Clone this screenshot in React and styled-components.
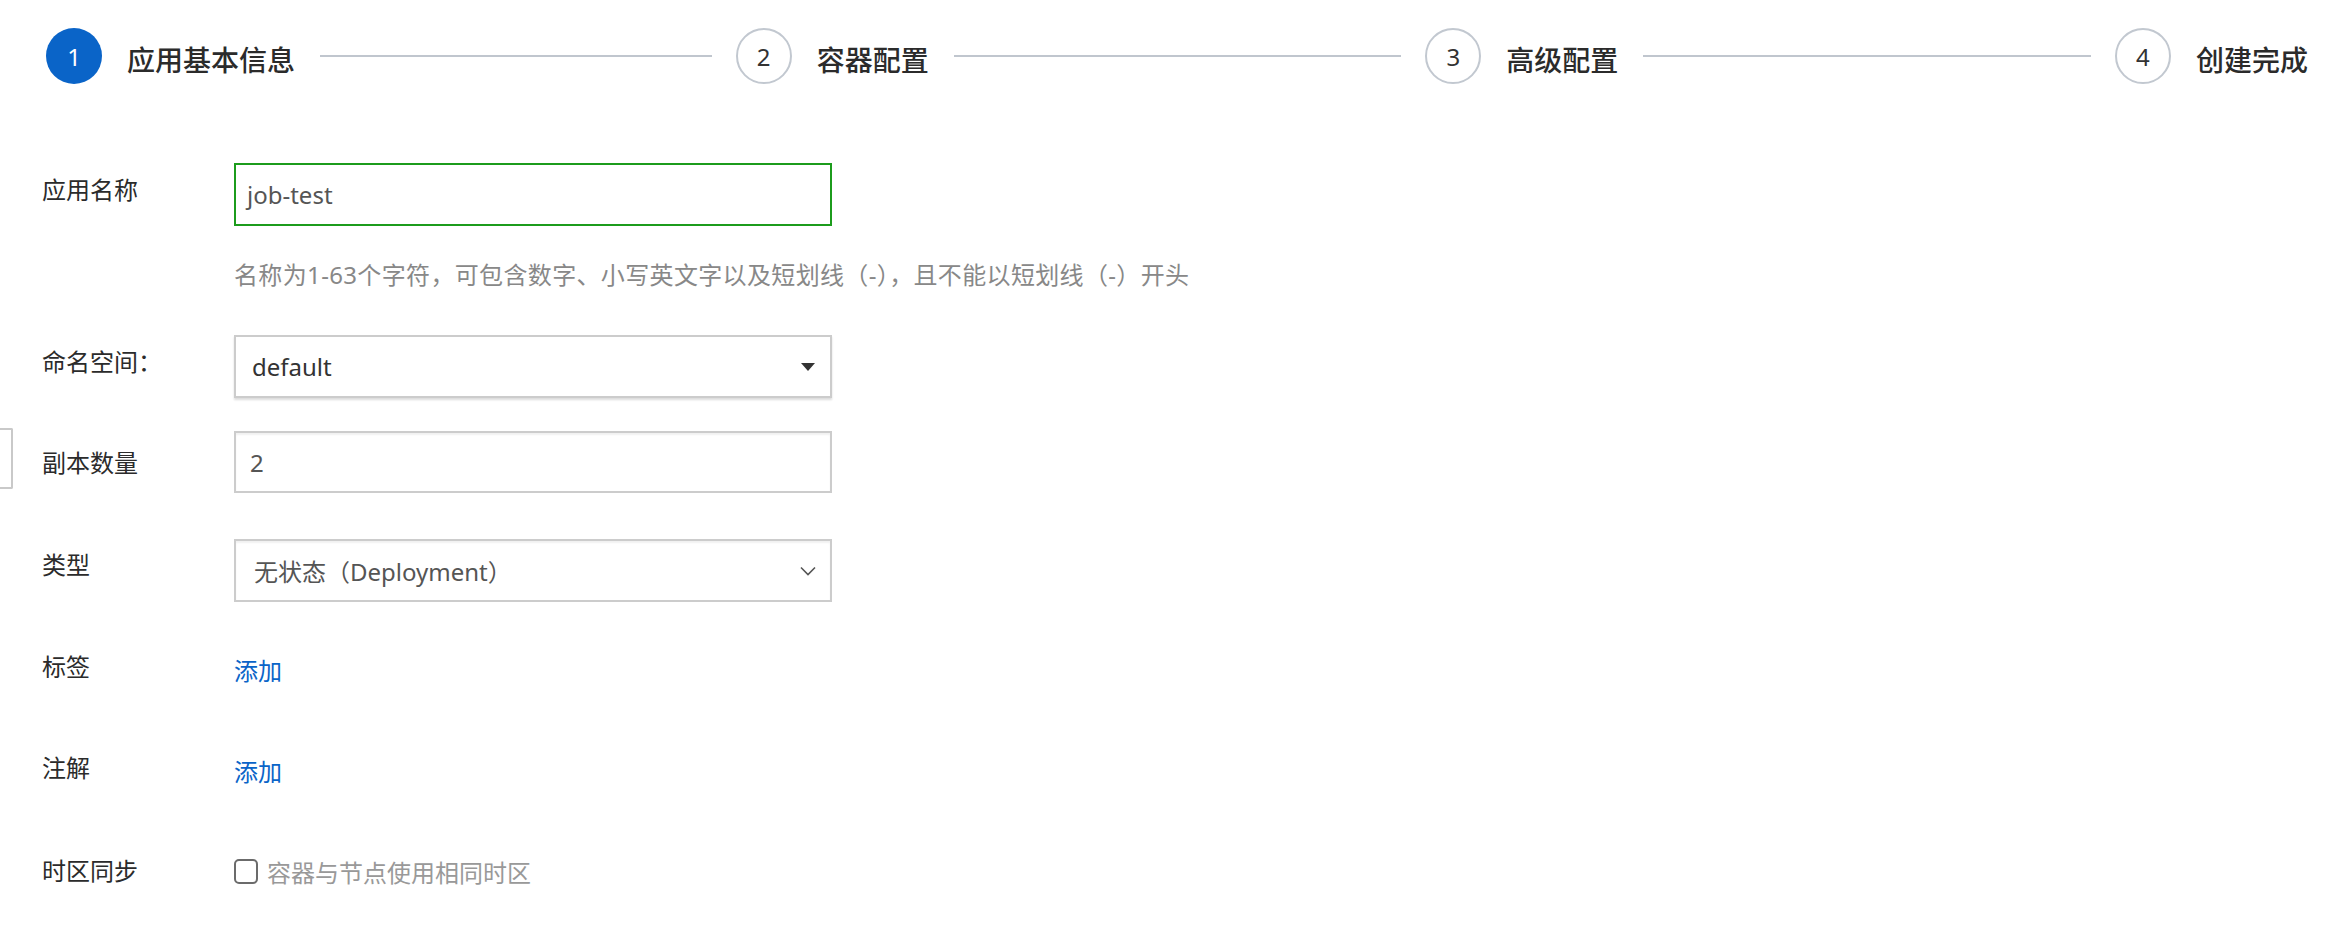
import React from "react";
import styled, { createGlobalStyle } from "styled-components";

const Global = createGlobalStyle`
  html, body { margin: 0; padding: 0; background: #ffffff; }
  body {
    width: 2346px; height: 936px; overflow: hidden;
    font-family: "Noto Sans", "Noto Sans CJK SC", sans-serif;
    color: #333333;
  }
`;

const Page = styled.div`
  position: relative;
  width: 2346px;
  height: 936px;
  background: #ffffff;
  box-sizing: border-box;
`;

const EdgeTab = styled.div`
  position: absolute;
  left: 0;
  top: 428px;
  width: 11px;
  height: 57px;
  border: 2px solid #c9c9c9;
  border-left: none;
  border-radius: 0 2px 2px 0;
`;

const Steps = styled.div`
  display: flex;
  align-items: center;
  padding: 28px 38px 0 46px;
`;

const Step = styled.div`
  display: flex;
  align-items: center;
  flex: ${(p) => (p.$last ? "0 0 auto" : "1 1 0")};
`;

const Circle = styled.div`
  width: 56px;
  height: 56px;
  flex: 0 0 56px;
  box-sizing: border-box;
  border-radius: 50%;
  display: flex;
  align-items: center;
  justify-content: center;
  font-size: 24px;
  font-weight: 400;
  background: ${(p) => (p.$active ? "#0a64c8" : "#ffffff")};
  color: ${(p) => (p.$active ? "#ffffff" : "#333333")};
  border: ${(p) => (p.$active ? "none" : "2px solid #c2c8d0")};
`;

const StepTitle = styled.div`
  margin-left: 25px;
  padding-top: 8px;
  font-size: 28px;
  font-weight: 500;
  line-height: 40px;
  color: #2b2b2b;
  white-space: nowrap;
`;

const StepLine = styled.div`
  flex: 1 1 auto;
  height: 2px;
  background: #c0c6ce;
  margin: 0 24px 0 25px;
`;

const Form = styled.div`
  padding-left: 42px;
  margin-top: 79px;
`;

const Row = styled.div`
  display: flex;
  align-items: flex-start;
  margin-top: ${(p) => p.$mt || 0}px;
`;

const Label = styled.div`
  width: 192px;
  flex: 0 0 192px;
  font-size: 24px;
  line-height: 36px;
  padding-top: ${(p) => p.$pt || 0}px;
  color: #2b2b2b;
  white-space: nowrap;
`;

const Control = styled.div`
  display: flex;
  flex-direction: column;
`;

const Field = styled.div`
  width: 598px;
  height: ${(p) => p.$h || 63}px;
  box-sizing: border-box;
  display: flex;
  align-items: center;
  justify-content: space-between;
  padding: 0 14px 0 ${(p) => p.$pl || 14}px;
  font-size: 24px;
  background: #ffffff;
  color: ${(p) => (p.$muted ? "#555555" : "#333333")};
  border: 2px solid ${(p) => (p.$ok ? "#1c9c1c" : "#cccccc")};
  box-shadow: ${(p) =>
    p.$raised
      ? "0 2px 2px rgba(0,0,0,0.14)"
      : p.$ok
      ? "none"
      : "inset 0 2px 2px rgba(0,0,0,0.06)"};
`;

const Hint = styled.div`
  margin-top: 31px;
  font-size: 24px;
  line-height: 36px;
  letter-spacing: 0.35px;
  color: #888888;
  white-space: nowrap;
`;

const Link = styled.a`
  display: block;
  font-size: 24px;
  line-height: 36px;
  padding-top: 4px;
  color: #0a64c8;
  text-decoration: none;
  cursor: pointer;
`;

const CheckRow = styled.label`
  display: flex;
  align-items: center;
  height: 36px;
  font-size: 24px;
  color: #999999;
`;

const Box = styled.span`
  width: 24px;
  height: 25px;
  box-sizing: border-box;
  border: 2px solid #6b6b6b;
  border-radius: 5px;
  margin-right: 9px;
  background: #ffffff;
`;

const Caret = () => (
  <svg width="16" height="10" viewBox="0 0 16 10">
    <path d="M1 1 L15 1 L8 9 Z" fill="#333333" />
  </svg>
);

const Chevron = () => (
  <svg width="16" height="10" viewBox="0 0 16 10">
    <polyline points="1,1.5 8,8.5 15,1.5" fill="none" stroke="#555555" strokeWidth="1.6" />
  </svg>
);

const steps = ["应用基本信息", "容器配置", "高级配置", "创建完成"];

export default function App() {
  return (
    <Page>
      <Global />
      <EdgeTab />
      <Steps>
        {steps.map((s, i) => {
          const last = i === steps.length - 1;
          return (
            <Step key={s} $last={last}>
              <Circle $active={i === 0}>{i + 1}</Circle>
              <StepTitle>{s}</StepTitle>
              {!last && <StepLine />}
            </Step>
          );
        })}
      </Steps>
      <Form>
        <Row>
          <Label $pt={9}>应用名称</Label>
          <Control>
            <Field $ok $pl={11} $muted>job-test</Field>
            <Hint>名称为1-63个字符，可包含数字、小写英文字以及短划线（-），且不能以短划线（-）开头</Hint>
          </Control>
        </Row>
        <Row $mt={42}>
          <Label $pt={9}>命名空间：</Label>
          <Field $raised $pl={16}>
            <span>default</span>
            <Caret />
          </Field>
        </Row>
        <Row $mt={33}>
          <Label $pt={14}>副本数量</Label>
          <Field $h={62} $pl={14} $muted>2</Field>
        </Row>
        <Row $mt={46}>
          <Label $pt={8}>类型</Label>
          <Field $pl={18} $muted>
            <span>无状态（Deployment）</span>
            <Chevron />
          </Field>
        </Row>
        <Row $mt={47}>
          <Label>标签</Label>
          <Link>添加</Link>
        </Row>
        <Row $mt={61}>
          <Label>注解</Label>
          <Link>添加</Link>
        </Row>
        <Row $mt={63}>
          <Label>时区同步</Label>
          <CheckRow>
            <Box />
            容器与节点使用相同时区
          </CheckRow>
        </Row>
      </Form>
    </Page>
  );
}
